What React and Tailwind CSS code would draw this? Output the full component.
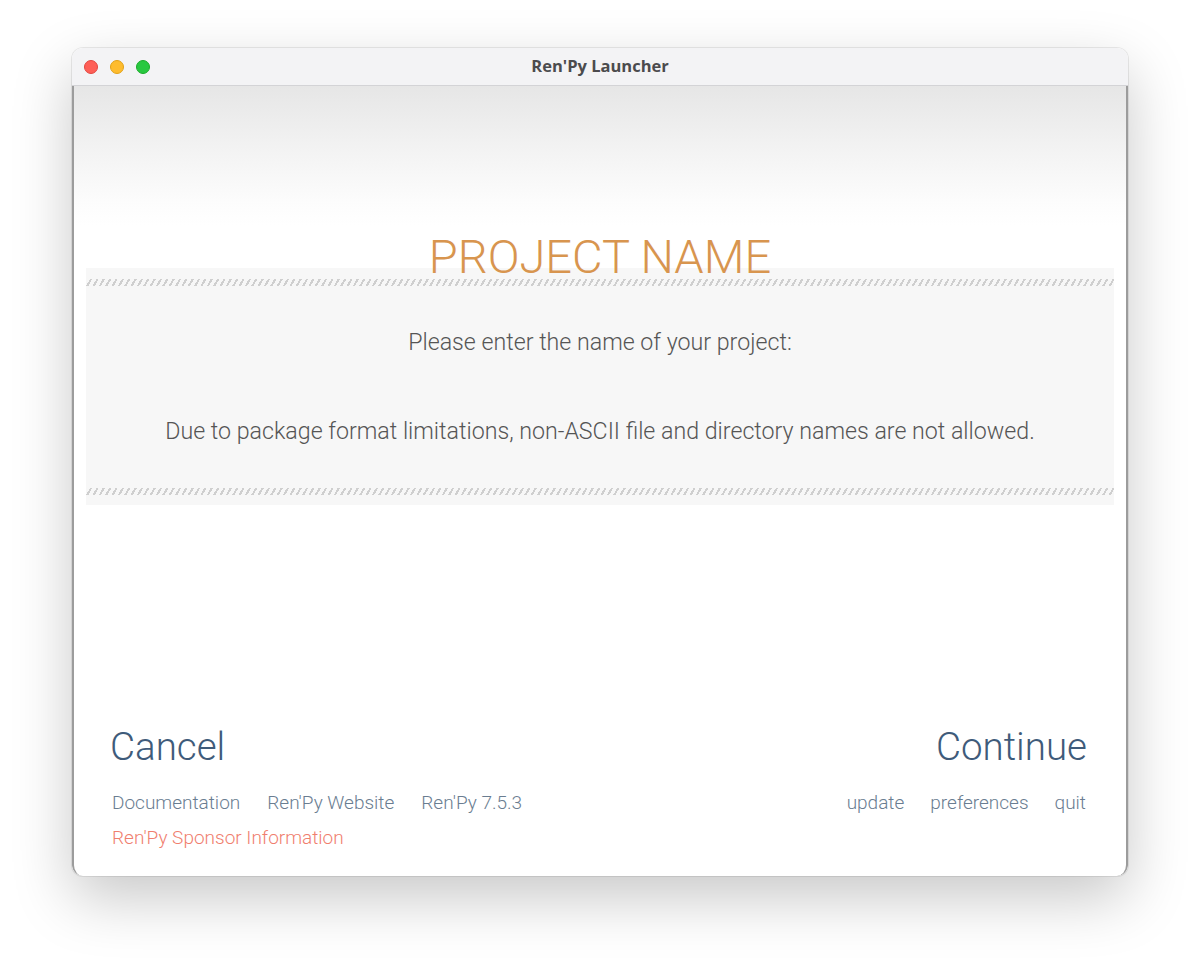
import React from "react";

export default function App() {
  const hatch =
    "h-[7px] bg-[repeating-linear-gradient(120deg,transparent_0px,transparent_3.5px,#cfcfcf_3.5px,#cfcfcf_5.5px)]";
  return (
    <div className="w-[1200px] h-[972px] bg-white pt-[48px] pl-[72px]" style={{ fontFamily: "Roboto, 'Noto Sans', sans-serif" }}>
      <div className="w-[1056px] h-[828px] rounded-[11px] flex flex-col overflow-hidden shadow-[0_22px_60px_rgba(0,0,0,0.22),0_0_0_1px_rgba(0,0,0,0.08)]">
        {/* title bar */}
        <div className="h-[38px] shrink-0 bg-[#f3f3f5] border-b border-[#d3d3d6] flex items-center relative">
          <div className="flex items-center gap-[12px] pl-[12px]">
            <span className="w-[14px] h-[14px] rounded-full bg-[#fe5f57] border border-[#e2463f]" />
            <span className="w-[14px] h-[14px] rounded-full bg-[#febc2e] border border-[#e1a116]" />
            <span className="w-[14px] h-[14px] rounded-full bg-[#28c840] border border-[#1aab29]" />
          </div>
          <div className="absolute inset-0 flex items-center justify-center text-[16.5px] font-bold text-[#4b4b4d]" style={{ fontFamily: "'Open Sans', Inter, sans-serif" }}>
            Ren'Py Launcher
          </div>
        </div>
        {/* content */}
        <div className="flex-1 flex flex-col border-x-2 border-[#9c9c9c] rounded-b-[11px] bg-[linear-gradient(#e6e6e6,#f4f4f4_70px,#fcfcfc_115px,#ffffff_140px)] font-light">
          <div className="h-[147px] shrink-0" />
          <div className="relative z-10 text-center text-[47px] leading-[47px] text-[#d8954f] -mb-[12px]">
            PROJECT NAME
          </div>
          <div className="mx-[12px] h-[237px] bg-[#f7f7f7] pt-[11px] pb-[10px] flex flex-col">
            <div className={hatch} />
            <div className="mt-[40px] text-center text-[23.2px] leading-[32px] text-[#555555]">
              Please enter the name of your project:
            </div>
            <div className="mt-[57px] text-center text-[23.2px] leading-[32px] text-[#555555]">
              Due to package format limitations, non-ASCII file and directory names are not allowed.
            </div>
            <div className="flex-1" />
            <div className={hatch} />
          </div>
          <div className="flex-1" />
          <div className="pl-[36px] pr-[39px] pb-[26px] flex flex-col">
            <div className="flex justify-between text-[38.5px] leading-[44px] text-[#3f5b7a]">
              <span>Cancel</span>
              <span>Continue</span>
            </div>
            <div className="mt-[22px] flex justify-between text-[19px] leading-[24px] text-[#6a7d91]">
              <div className="flex gap-[27px] pl-[2px]">
                <span>Documentation</span>
                <span>Ren'Py Website</span>
                <span>Ren'Py 7.5.3</span>
              </div>
              <div className="flex gap-[26px] pr-[1px]">
                <span>update</span>
                <span>preferences</span>
                <span>quit</span>
              </div>
            </div>
            <div className="mt-[11px] pl-[2px] text-[19px] leading-[24px] text-[#f07e6e]">
              Ren'Py Sponsor Information
            </div>
          </div>
        </div>
      </div>
    </div>
  );
}
